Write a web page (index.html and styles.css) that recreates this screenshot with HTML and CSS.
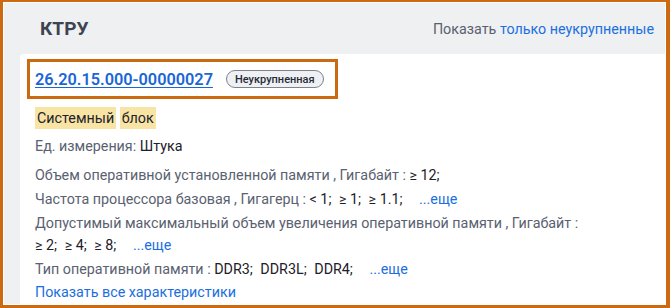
FILE: index.html
```html
<!DOCTYPE html>
<html lang="ru">
<head>
<meta charset="utf-8">
<link rel="stylesheet" href="styles.css">
</head>
<body>
<div class="frame">
  <div class="panel">
    <div class="header">
      <h2 class="title">КТРУ</h2>
      <div class="filter">Показать <a class="link" href="#">только неукрупненные</a></div>
    </div>
    <div class="card">
      <div class="code-box">
        <a class="code" href="#">26.20.15.000-00000027</a>
        <span class="badge">Неукрупненная</span>
      </div>
      <div class="name"><span class="hl">Системный</span> <span class="hl">блок</span></div>
      <div class="unit"><span class="label">Ед. измерения:</span> <span class="value">Штука</span></div>
      <ul class="props">
        <li class="prop"><span class="label">Объем оперативной установленной памяти , Гигабайт :</span> <span class="vals"><span class="value">≥ 12;</span></span></li>
        <li class="prop"><span class="label">Частота процессора базовая , Гигагерц :</span> <span class="vals"><span class="value">&lt; 1;</span> <span class="value">≥ 1;</span> <span class="value">≥ 1.1;</span> <a class="more" href="#">...еще</a></span></li>
        <li class="prop"><span class="label">Допустимый максимальный объем увеличения оперативной памяти , Гигабайт :</span> <span class="vals"><span class="value">≥ 2;</span> <span class="value">≥ 4;</span> <span class="value">≥ 8;</span> <a class="more" href="#">...еще</a></span></li>
        <li class="prop"><span class="label">Тип оперативной памяти :</span> <span class="vals"><span class="value">DDR3;</span> <span class="value">DDR3L;</span> <span class="value">DDR4;</span> <a class="more" href="#">...еще</a></span></li>
      </ul>
      <a class="all" href="#">Показать все характеристики</a>
    </div>
  </div>
</div>
</body>
</html>
```

FILE: styles.css
```css
* { box-sizing: border-box; }
html, body { margin: 0; padding: 0; background: #fff; }
body { font-family: Roboto, "Noto Sans", sans-serif; }

.frame {
  width: 670px;
  height: 308px;
  border-style: solid;
  border-color: #cc6a12;
  border-width: 2px 4px 3px 3px;
  padding: 1px;
  background: #fff;
}
.panel {
  height: 100%;
  background: #eff0f2;
  padding-left: 16px;
  display: flex;
  flex-direction: column;
  overflow: hidden;
}
.header {
  height: 51px;
  display: flex;
  align-items: center;
  justify-content: space-between;
  padding: 0 11px 0 20px;
}
.title {
  margin: 0;
  font-size: 19px;
  font-weight: 700;
  color: #3c4452;
  letter-spacing: 0.1px;
}
.filter {
  font-size: 14.3px;
  color: #596070;
}
.link { color: #1b6fe0; text-decoration: none; }

.card {
  flex: 1;
  background: #fff;
  border-radius: 4px 0 0 0;
  padding: 5px 15px 0 7px;
}
.code-box {
  display: inline-flex;
  align-items: center;
  border: 3px solid #cc6a12;
  height: 40px;
  padding: 0 11px 0 5px;
  gap: 13px;
}
.code {
  font-size: 16.3px;
  font-weight: 600;
  color: #1a66d6;
  text-decoration: underline;
  text-underline-offset: 2px;
}
.badge {
  display: inline-flex;
  align-items: center;
  height: 18px;
  padding: 0 8px;
  border: 1px solid #7d828d;
  border-radius: 9px;
  background: #eef0f3;
  font-size: 11px;
  font-weight: 500;
  color: #262b35;
}
.name {
  margin: 8px 0 0 8px;
  font-size: 14.3px;
  line-height: 22px;
  color: #1d222c;
}
.hl { background: #f8e4a4; padding: 3px 2px; }

.unit, .prop, .all {
  font-size: 14.3px;
  line-height: 22px;
}
.unit { margin: 6px 0 0 8px; }
.label { color: #5a6170; }
.value { color: #1c2029; margin-right: 4px; }
.props {
  list-style: none;
  margin: 7px 0 0 8px;
  padding: 0;
}
.prop { margin-bottom: 2px; }
.vals { display: inline-block; white-space: nowrap; }
.more { color: #1b6fe0; text-decoration: none; margin-left: 9px; }
.all {
  display: block;
  margin: -1px 0 0 8px;
  color: #1b6fe0;
  text-decoration: none;
}
```
